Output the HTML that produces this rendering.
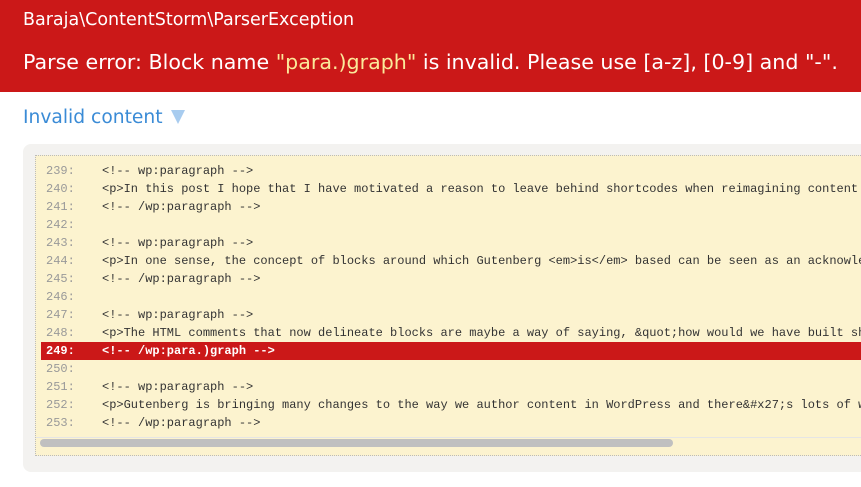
<!DOCTYPE html>
<html><head><style>
body{margin:0;width:861px;height:487px;overflow:hidden;background:#fff;font-family:"DejaVu Sans",sans-serif;}
.hdr{position:absolute;left:0;top:0;width:861px;height:92px;background:#cb1818;color:#fff;}
.t1{position:absolute;left:23px;top:10px;font-size:17.5px;white-space:nowrap;}
.t2{position:absolute;left:23px;top:50px;font-size:20.6px;white-space:nowrap;}
.q{color:#fbe99a;}
.inv{position:absolute;left:23px;top:107px;font-size:18.7px;color:#3a8bd6;white-space:nowrap;}
.tri{display:inline-block;width:0;height:0;border-left:7px solid transparent;border-right:7px solid transparent;border-top:14px solid #a8ccef;margin-left:8px;vertical-align:-1px;}
.box{position:absolute;left:23px;top:144px;width:860px;height:328px;background:#f3f2f0;border-radius:8px;}
.code{position:absolute;left:35px;top:155px;width:840px;height:299px;background:#fcf3cf;border:1px dotted #bbb;}
.ln{position:absolute;left:0;width:840px;height:18px;font-family:"Liberation Mono",monospace;font-size:12px;line-height:18px;white-space:pre;color:#333;}
.ln b{font-weight:normal;position:absolute;left:10px;color:#999;}
.ln span{position:absolute;left:66px;}
.hl{background:#cb1818;color:#fff;font-weight:bold;left:5px;}
.hl b{color:#fff;font-weight:bold;left:5px;}
.hl span{left:61px;}
.sb{position:absolute;left:4px;top:283px;width:633px;height:8px;border-radius:4px;background:#c0c0c0;}
.track{position:absolute;left:0;top:281px;width:840px;height:12px;border-top:1px solid #e5e5e5;background:#fcf3cf;}
</style></head><body>
<div class="hdr">
<div class="t1">Baraja\ContentStorm\ParserException</div>
<div class="t2">Parse error: Block name <span class="q">"para.)graph"</span> is invalid. Please use [a-z], [0-9] and "-".</div>
</div>
<div class="inv">Invalid content<span class="tri"></span></div>
<div class="box"></div>
<div class="code">
<div class="ln" style="top:6px"><b>239:</b><span>&lt;!-- wp:paragraph --&gt;</span></div>
<div class="ln" style="top:24px"><b>240:</b><span>&lt;p&gt;In this post I hope that I have motivated a reason to leave behind shortcodes when reimagining content</span></div>
<div class="ln" style="top:42px"><b>241:</b><span>&lt;!-- /wp:paragraph --&gt;</span></div>
<div class="ln" style="top:60px"><b>242:</b><span></span></div>
<div class="ln" style="top:78px"><b>243:</b><span>&lt;!-- wp:paragraph --&gt;</span></div>
<div class="ln" style="top:96px"><b>244:</b><span>&lt;p&gt;In one sense, the concept of blocks around which Gutenberg &lt;em&gt;is&lt;/em&gt; based can be seen as an acknowle</span></div>
<div class="ln" style="top:114px"><b>245:</b><span>&lt;!-- /wp:paragraph --&gt;</span></div>
<div class="ln" style="top:132px"><b>246:</b><span></span></div>
<div class="ln" style="top:150px"><b>247:</b><span>&lt;!-- wp:paragraph --&gt;</span></div>
<div class="ln" style="top:168px"><b>248:</b><span>&lt;p&gt;The HTML comments that now delineate blocks are maybe a way of saying, &amp;quot;how would we have built sh</span></div>
<div class="ln hl" style="top:186px"><b>249:</b><span>&lt;!-- /wp:para.)graph --&gt;</span></div>
<div class="ln" style="top:204px"><b>250:</b><span></span></div>
<div class="ln" style="top:222px"><b>251:</b><span>&lt;!-- wp:paragraph --&gt;</span></div>
<div class="ln" style="top:240px"><b>252:</b><span>&lt;p&gt;Gutenberg is bringing many changes to the way we author content in WordPress and there&amp;#x27;s lots of w</span></div>
<div class="ln" style="top:258px"><b>253:</b><span>&lt;!-- /wp:paragraph --&gt;</span></div>
<div class="track"></div>
<div class="sb"></div>
</div>
</body></html>
